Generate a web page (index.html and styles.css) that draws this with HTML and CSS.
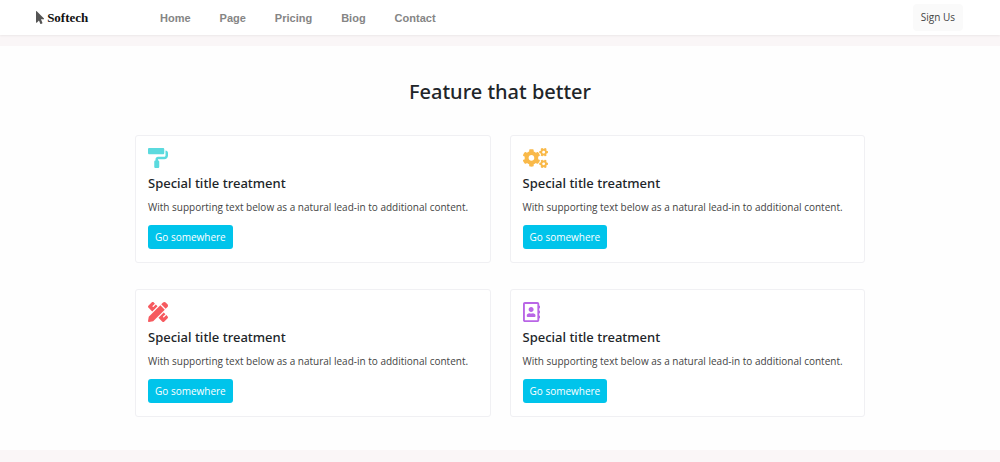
FILE: index.html
```html
<!DOCTYPE html>
<html lang="en">
<head>
    <meta charset="UTF-8">
    <meta name="viewport" content="width=device-width, initial-scale=1.0">
    <title>Softech</title>
    <link rel="stylesheet" href="styles.css">
</head>
<body>
    <header class="navbar">
        <a class="logo" href="#">
            <svg class="logo-icon" viewBox="0 0 320 512" aria-hidden="true"><path d="M302.189 329.126H196.105l55.831 135.993c3.889 9.428-.555 19.999-9.444 23.999l-49.165 21.427c-9.165 4-19.443-.571-23.332-9.714l-53.053-129.136-86.664 89.138C18.729 472.71 0 463.554 0 447.977V18.299C0 1.899 19.921-6.096 30.277 5.443l284.412 292.542c11.472 11.179 3.007 31.141-12.5 31.141z"/></svg>
            Softech
        </a>
        <nav class="menu">
            <a href="#">Home</a>
            <a href="#">Page</a>
            <a href="#">Pricing</a>
            <a href="#">Biog</a>
            <a href="#">Contact</a>
        </nav>
        <button class="btn-sign" type="button">Sign Us</button>
    </header>

    <main class="features">
        <h1>Feature that better</h1>

        <div class="cards">
            <div class="card">
                <svg class="icon icon-roller" viewBox="0 0 512 512" aria-hidden="true"><path d="M416 128V32c0-17.67-14.33-32-32-32H32C14.33 0 0 14.33 0 32v96c0 17.67 14.33 32 32 32h352c17.67 0 32-14.33 32-32zm32-64v128c0 17.67-14.33 32-32 32H256c-35.35 0-64 28.65-64 64v32c-17.67 0-32 14.33-32 32v128c0 17.67 14.33 32 32 32h64c17.67 0 32-14.33 32-32V352c0-17.67-14.33-32-32-32v-32h160c53.02 0 96-42.98 96-96v-64c0-35.35-28.65-64-64-64z"/></svg>
                <h2>Special title treatment</h2>
                <p>With supporting text below as a natural lead-in to additional content.</p>
                <a class="btn" href="#">Go somewhere</a>
            </div>

            <div class="card">
                <svg class="icon icon-cogs" viewBox="0 0 640 512" aria-hidden="true">
                    <path id="small-cog" d="M512.1 191l-8.2 14.3c-3 5.3-9.4 7.5-15.1 5.4-11.8-4.4-22.6-10.7-32.1-18.6-4.6-3.8-5.8-10.5-2.8-15.7l8.2-14.3c-6.9-8-12.3-17.3-15.9-27.4h-16.5c-6 0-11.2-4.3-12.2-10.3-2-12-2.1-24.6 0-37.1 1-6 6.2-10.4 12.2-10.4h16.5c3.6-10.1 9-19.4 15.9-27.4l-8.2-14.3c-3-5.2-1.9-11.9 2.8-15.7 9.5-7.9 20.4-14.2 32.1-18.6 5.7-2.1 12.1.1 15.1 5.4l8.2 14.3c10.5-1.9 21.2-1.9 31.7 0L552 6.3c3-5.3 9.4-7.5 15.1-5.4 11.8 4.4 22.6 10.7 32.1 18.6 4.6 3.8 5.8 10.5 2.8 15.7l-8.2 14.3c6.9 8 12.3 17.3 15.9 27.4h16.5c6 0 11.2 4.3 12.2 10.3 2 12 2.1 24.6 0 37.1-1 6-6.2 10.4-12.2 10.4h-16.5c-3.6 10.1-9 19.4-15.9 27.4l8.2 14.3c3 5.2 1.9 11.9-2.8 15.7-9.5 7.9-20.4 14.2-32.1 18.6-5.7 2.1-12.1-.1-15.1-5.4l-8.2-14.3c-10.4 1.9-21.2 1.9-31.7 0zm-10.5-58.8c38.5 29.6 82.4-14.3 52.8-52.8-38.5-29.7-82.4 14.3-52.8 52.8z"/>
                    <use href="#small-cog" y="299"/>
                    <path d="M386.3 286.1l33.7 16.8c10.1 5.8 14.5 18.1 10.5 29.1-8.9 24.2-26.4 46.4-42.6 65.8-7.4 8.9-20.2 11.1-30.3 5.3l-29.1-16.8c-16 13.7-34.6 24.6-54.9 31.7v33.6c0 11.6-8.3 21.6-19.7 23.6-24.6 4.2-50.4 4.4-75.9 0-11.5-2-20-11.9-20-23.6V418c-20.3-7.2-38.9-18-54.9-31.7L74 403c-10 5.8-22.9 3.6-30.3-5.3-16.2-19.4-33.3-41.6-42.2-65.7-4-10.9.4-23.2 10.5-29.1l33.3-16.8c-3.9-20.9-3.9-42.4 0-63.4L12 205.8c-10.1-5.8-14.6-18.1-10.5-29 8.9-24.2 26-46.4 42.2-65.8 7.4-8.9 20.2-11.1 30.3-5.3l29.1 16.8c16-13.7 34.6-24.6 54.9-31.7V57.1c0-11.5 8.2-21.5 19.6-23.5 24.6-4.2 50.5-4.4 76-.1 11.5 2 20 11.9 20 23.6v33.6c20.3 7.2 38.9 18 54.9 31.7l29.1-16.8c10-5.8 22.9-3.6 30.3 5.3 16.2 19.4 33.2 41.6 42.1 65.8 4 10.9.1 23.2-10 29.1l-33.7 16.8c3.9 21 3.9 42.5 0 63.5zm-117.6 21.1c59.2-77-28.7-164.9-105.7-105.7-59.2 77 28.7 164.9 105.7 105.7z"/>
                </svg>
                <h2>Special title treatment</h2>
                <p>With supporting text below as a natural lead-in to additional content.</p>
                <a class="btn" href="#">Go somewhere</a>
            </div>

            <div class="card">
                <svg class="icon icon-pencil" viewBox="0 0 512 512" aria-hidden="true"><path d="M109.46 244.04l134.58-134.56-44.12-44.12-61.68 61.68a7.919 7.919 0 0 1-11.21 0l-11.21-11.21c-3.1-3.1-3.1-8.12 0-11.21l61.68-61.68-33.64-33.65C131.47-3.1 111.39-3.1 99 9.29L9.29 99c-12.38 12.39-12.39 32.47 0 44.86l100.17 100.18zm388.47-116.8c18.76-18.76 18.75-49.17 0-67.93l-45.25-45.25c-18.76-18.76-49.18-18.76-67.95 0l-46.02 46.01 113.2 113.2 46.02-46.03zM316.08 82.71l-297 296.96L.32 487.11c-2.53 14.49 10.09 27.11 24.59 24.56l107.45-18.84L429.28 195.9 316.08 82.71zm186.63 285.43l-33.64-33.64-61.68 61.68c-3.1 3.1-8.12 3.1-11.21 0l-11.21-11.21c-3.09-3.1-3.09-8.12 0-11.21l61.68-61.68-44.14-44.14L267.93 402.5l100.21 100.2c12.39 12.39 32.47 12.39 44.86 0l89.71-89.7c12.39-12.39 12.39-32.47 0-44.86z"/></svg>
                <h2>Special title treatment</h2>
                <p>With supporting text below as a natural lead-in to additional content.</p>
                <a class="btn" href="#">Go somewhere</a>
            </div>

            <div class="card">
                <svg class="icon icon-book" viewBox="0 0 448 512" aria-hidden="true"><path d="M436 160c6.6 0 12-5.4 12-12v-40c0-6.6-5.4-12-12-12h-20V48c0-26.5-21.5-48-48-48H48C21.5 0 0 21.5 0 48v416c0 26.5 21.5 48 48 48h320c26.5 0 48-21.5 48-48v-48h20c6.6 0 12-5.4 12-12v-40c0-6.6-5.4-12-12-12h-20v-64h20c6.6 0 12-5.4 12-12v-40c0-6.6-5.4-12-12-12h-20v-64h20zm-68 304H48V48h320v416zM208 256c35.3 0 64-28.7 64-64s-28.7-64-64-64-64 28.7-64 64 28.7 64 64 64zm-89.6 128h179.2c12.4 0 22.4-8.6 22.4-19.2v-19.2c0-31.8-30.1-57.6-67.2-57.6-10.8 0-18.7 8-44.8 8-26.9 0-33.4-8-44.8-8-37.1 0-67.2 25.8-67.2 57.6v19.2c0 10.6 10 19.2 22.4 19.2z"/></svg>
                <h2>Special title treatment</h2>
                <p>With supporting text below as a natural lead-in to additional content.</p>
                <a class="btn" href="#">Go somewhere</a>
            </div>
        </div>
    </main>
</body>
</html>
```
FILE: styles.css
```css
* {
    box-sizing: border-box;
}

body {
    margin: 0;
    font-family: 'Open Sans', 'Noto Sans', sans-serif;
    font-size: 10px;
    color: #212529;
    background-color: #faf6f7;
}

a {
    text-decoration: none;
}

.navbar {
    display: flex;
    align-items: center;
    padding: 4px 37px 4px 36px;
    background-color: #ffffff;
    box-shadow: 0 1px 2px rgba(0, 0, 0, 0.06);
}

.logo {
    display: flex;
    align-items: center;
    gap: 3px;
    width: 124px;
    font-family: 'Liberation Serif', serif;
    font-size: 13px;
    font-weight: bold;
    color: #111111;
}

.logo-icon {
    height: 13px;
    fill: #555555;
}

.menu {
    display: flex;
    gap: 29px;
    flex: 1;
}

.menu a {
    font-family: 'Liberation Sans', Arial, sans-serif;
    font-size: 11px;
    font-weight: bold;
    color: #858585;
}

.btn-sign {
    padding: 6px 8px;
    border: none;
    border-radius: 4px;
    font-family: inherit;
    font-size: 10px;
    line-height: 15px;
    color: #444444;
    background-color: #fafafa;
}

.features {
    margin: 11px 0 13px;
    padding: 32px 20px 33px;
    background-color: #fefefe;
}

h1 {
    margin: 0 0 29px;
    font-family: 'Noto Sans', sans-serif;
    font-size: 20px;
    font-weight: 500;
    line-height: 28px;
    text-align: center;
}

.cards {
    display: grid;
    grid-template-columns: 1fr 1fr;
    gap: 26px 19px;
    max-width: 730px;
    margin: 0 auto;
}

.card {
    padding: 12px 12px 13px;
    border: 1px solid #f0f0f3;
    border-radius: 3px;
    background-color: #ffffff;
}

.icon {
    display: block;
    height: 20px;
}

.icon-roller {
    fill: #5bdade;
}

.icon-cogs {
    fill: #f9b949;
}

.icon-pencil {
    fill: #f65a5f;
}

.icon-book {
    fill: #b965e6;
}

.card h2 {
    margin: 6px 0 7px;
    font-family: 'Noto Sans', sans-serif;
    font-size: 13px;
    font-weight: 500;
    line-height: 18px;
}

.card p {
    margin: 0 0 10px;
    line-height: 16px;
    color: #444444;
}

.btn {
    display: inline-block;
    padding: 4px 7px;
    border-radius: 3px;
    line-height: 16px;
    color: #ffffff;
    background-color: #00c4eb;
}
```
